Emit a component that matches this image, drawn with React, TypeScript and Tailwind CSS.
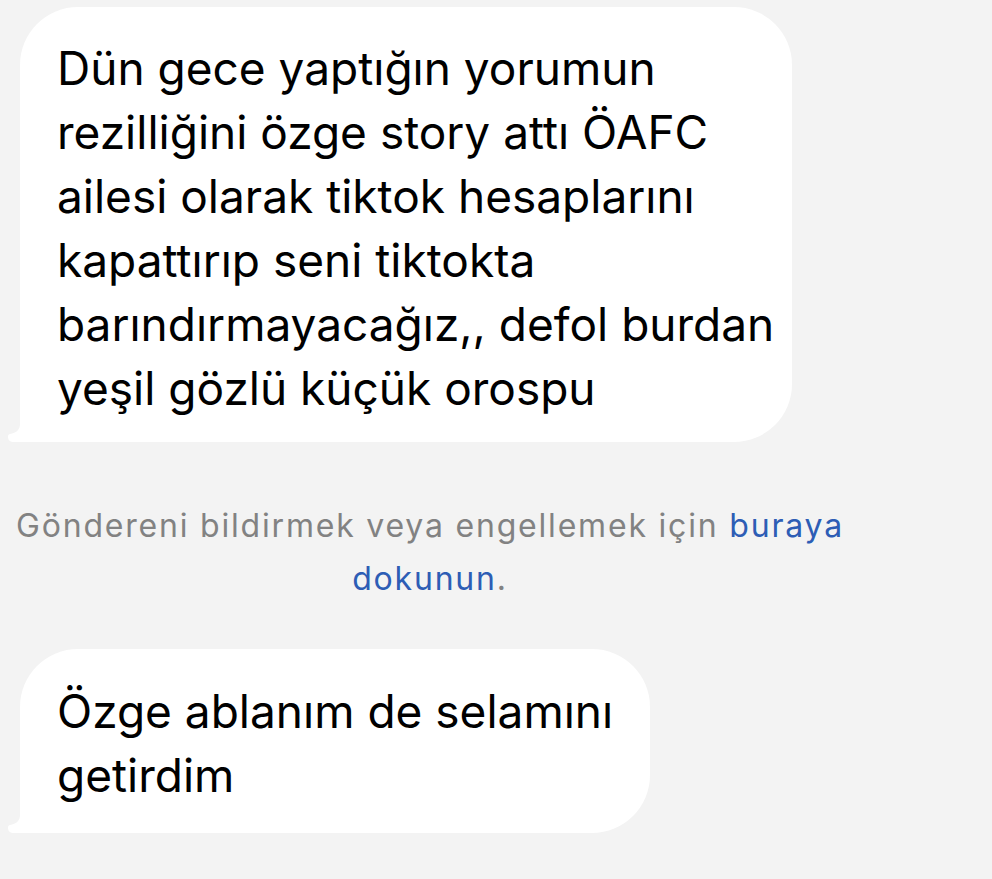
const Tail = () => (
  <svg
    className="absolute left-[-12px] bottom-0"
    width="24"
    height="18"
    viewBox="0 0 24 18"
  >
    <path d="M12 0 C12 6 8 9 2 10 C0 10.5 0 12 0 13 C0 16 2 18 6 18 L24 18 L24 0 Z" fill="#ffffff" />
  </svg>
)

const Bubble = ({ children, width, className }: { children: React.ReactNode; width: string; className?: string }) => {
  return (
    <div className={`relative bg-white rounded-[58px] rounded-bl-none ${width} ${className ?? ""}`}>
      <div className="pl-[37px] pr-[4px] text-[46px] leading-[64px] text-black">{children}</div>
      <Tail />
    </div>
  )
}

export default function App() {
  return (
    <div
      className="w-[992px] h-[879px] bg-[#f3f3f3] overflow-hidden"
      style={{ fontFamily: "Inter, 'Noto Sans', sans-serif" }}
    >
      <div className="pl-[20px] pt-[7px]">
        <Bubble width="w-[772px]" className="pt-[29px] pb-[22px]">
          Dün gece yaptığın yorumun rezilliğini özge story attı ÖAFC ailesi olarak tiktok hesaplarını kapattırıp seni tiktokta barındırmayacağız,, defol burdan yeşil gözlü küçük orospu
        </Bubble>
      </div>

      <div className="mt-[57px] ml-[10px] w-[840px]">
        <p className="text-center text-[32px] leading-[53px] tracking-[1.8px] text-[#828282]">
          Göndereni bildirmek veya engellemek için <span className="text-[#2d5db5]">buraya</span>{" "}
          <span className="text-[#2d5db5]">dokunun</span>.
        </p>
      </div>

      <div className="pl-[20px] mt-[44px]">
        <Bubble width="w-[630px]" className="pt-[30px] pb-[26px]">
          Özge ablanım de selamını getirdim
        </Bubble>
      </div>
    </div>
  )
}
